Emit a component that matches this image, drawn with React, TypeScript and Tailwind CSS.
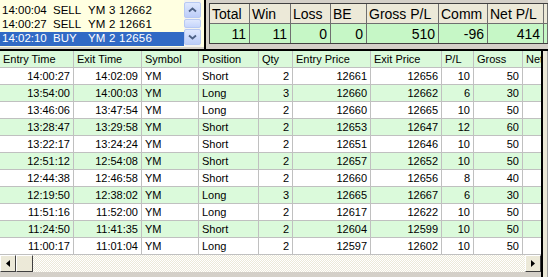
import React from "react";

const feed = [
  { time: "14:00:04", side: "SELL", order: "YM 3 12662", selected: false },
  { time: "14:00:27", side: "SELL", order: "YM 2 12661", selected: false },
  { time: "14:02:10", side: "BUY", order: "YM 2 12656", selected: true },
];

const stats = [
  { label: "Total", value: "11", w: 40 },
  { label: "Win", value: "11", w: 41 },
  { label: "Loss", value: "0", w: 40 },
  { label: "BE", value: "0", w: 36 },
  { label: "Gross P/L", value: "510", w: 72 },
  { label: "Comm", value: "-96", w: 49 },
  { label: "Net P/L", value: "414", w: 56 },
  { label: "", value: "", w: 4 },
];

const columns = [
  { label: "Entry Time", w: 74, right: true },
  { label: "Exit Time", w: 68, right: true },
  { label: "Symbol", w: 57, right: false },
  { label: "Position", w: 60, right: false },
  { label: "Qty", w: 34, right: true },
  { label: "Entry Price", w: 78, right: true },
  { label: "Exit Price", w: 71, right: true },
  { label: "P/L", w: 32, right: true },
  { label: "Gross", w: 49, right: true },
  { label: "Net P/L", w: 60, right: true },
];

const trades = [
  ["14:00:27", "14:02:09", "YM", "Short", "2", "12661", "12656", "10", "50", ""],
  ["13:54:00", "14:00:03", "YM", "Long", "3", "12660", "12662", "6", "30", ""],
  ["13:46:06", "13:47:54", "YM", "Long", "2", "12660", "12665", "10", "50", ""],
  ["13:28:47", "13:29:58", "YM", "Short", "2", "12653", "12647", "12", "60", ""],
  ["13:22:17", "13:24:24", "YM", "Short", "2", "12651", "12646", "10", "50", ""],
  ["12:51:12", "12:54:08", "YM", "Short", "2", "12657", "12652", "10", "50", ""],
  ["12:44:38", "12:46:58", "YM", "Short", "2", "12660", "12656", "8", "40", ""],
  ["12:19:50", "12:38:02", "YM", "Long", "3", "12665", "12667", "6", "30", ""],
  ["11:51:16", "11:52:00", "YM", "Long", "2", "12617", "12622", "10", "50", ""],
  ["11:24:50", "11:41:35", "YM", "Short", "2", "12604", "12599", "10", "50", ""],
  ["11:00:17", "11:01:04", "YM", "Long", "2", "12597", "12602", "10", "50", ""],
];

function XpButton({ down }: { down?: boolean }) {
  return (
    <div className="flex h-[16px] w-[17px] items-center justify-center rounded-[2px] border border-[#b7c9f3] bg-gradient-to-b from-[#dfe8fe] to-[#bccdf8]">
      <svg width="9" height="6" viewBox="0 0 9 6">
        <path
          d={down ? "M1 1.5 L4.5 4.5 L8 1.5" : "M1 4.5 L4.5 1.5 L8 4.5"}
          fill="none"
          stroke="#4d6185"
          strokeWidth="1.8"
        />
      </svg>
    </div>
  );
}

function ClassicButton({ left }: { left?: boolean }) {
  return (
    <div className="flex h-[17px] w-[16px] shrink-0 items-center justify-center border border-t-white border-l-white border-r-[#404040] border-b-[#404040] bg-[#ece9d8]">
      <svg width="4" height="7" viewBox="0 0 4 7">
        <path d={left ? "M4 0 L0 3.5 L4 7 Z" : "M0 0 L4 3.5 L0 7 Z"} fill="#000" />
      </svg>
    </div>
  );
}

export default function App() {
  return (
    <div className="h-[277px] w-[548px] overflow-hidden bg-[#d4d0c8] font-['Liberation_Sans',Arial,sans-serif] text-[11px] leading-none text-black">
      {/* top: order feed + summary */}
      <div className="flex h-[49px]">
        <div className="flex h-[47px] w-[204px] bg-[#ffffe1]">
          <div className="flex w-[184px] flex-col pt-[4px]">
            {feed.map((f) => (
              <div
                key={f.time}
                className={
                  "flex h-[14px] items-center whitespace-nowrap pl-[2px] text-[11.5px] " +
                  (f.selected ? "bg-[#316ac5] text-white" : "")
                }
              >
                <span className="w-[51px]">{f.time}</span>
                <span className="w-[35px]">{f.side}</span>
                <span className="tracking-[0.2px]">{f.order}</span>
              </div>
            ))}
          </div>
          <div className="flex w-[17px] flex-col gap-[1px] bg-[#f4f3ee] pt-[2px]">
            <XpButton />
            <div className="h-[9px] rounded-[2px] border border-[#b7c9f3] bg-gradient-to-b from-[#dfe8fe] to-[#c6d5fb]" />
            <XpButton down />
          </div>
        </div>
        <div className="w-[2px] bg-black" />
        <div className="w-[3px]" />
        <div className="mt-[3px] flex h-[41px] flex-col self-start border-t border-l border-b border-[#404040]">
          <div className="flex h-[20px]">
            {stats.map((s, i) => (
              <div
                key={i}
                style={{ width: s.w }}
                className="flex items-center border-r border-b border-[#6f6f6f] bg-[#ece9d8] pl-[2px] text-[14px] text-black"
              >
                {s.label}
              </div>
            ))}
          </div>
          <div className="flex h-[19px]">
            {stats.map((s, i) => (
              <div
                key={i}
                style={{ width: s.w }}
                className="flex items-center justify-end border-r border-[#6f6f6f] bg-[#c6f7c6] pr-[3px] text-[14px]"
              >
                {s.value}
              </div>
            ))}
          </div>
        </div>
      </div>

      <div className="h-[2px] bg-black" />

      {/* trade grid */}
      <div className="flex h-[226px]">
        <div className="flex w-[541px] flex-col">
          <div className="h-[204px] overflow-hidden bg-white">
            <div className="flex h-[17px] w-max bg-[#daf9da]">
              {columns.map((c) => (
                <div
                  key={c.label}
                  style={{ width: c.w }}
                  className="flex shrink-0 items-center overflow-hidden whitespace-nowrap border-r border-b border-[#c0c0c0] pl-[3px]"
                >
                  {c.label}
                </div>
              ))}
            </div>
            {trades.map((row, r) => (
              <div
                key={r}
                className={
                  "flex h-[17px] w-max " + (r % 2 === 1 ? "bg-[#dbfadb]" : "bg-white")
                }
              >
                {row.map((v, i) => (
                  <div
                    key={i}
                    style={{ width: columns[i].w }}
                    className={
                      "flex shrink-0 items-center border-r border-b border-[#c0c0c0] " +
                      (columns[i].right ? "justify-end pr-[3px]" : "pl-[3px]")
                    }
                  >
                    {v}
                  </div>
                ))}
              </div>
            ))}
          </div>
          <div className="flex h-[17px] bg-[repeating-conic-gradient(#ffffff_0_25%,#ece9d8_0_50%)] bg-[length:2px_2px]">
            <ClassicButton left />
            <div className="h-[17px] w-[17px] border border-t-white border-l-white border-r-[#404040] border-b-[#404040] bg-[#ece9d8]" />
            <div className="flex-1" />
            <ClassicButton />
          </div>
          <div className="h-[5px] bg-[#d4d0c8]" />
        </div>
        <div className="w-[2px] bg-black" />
        <div className="flex-1 border-r border-[#a0a0a0] bg-[#ece9d8]" />
      </div>
    </div>
  );
}
